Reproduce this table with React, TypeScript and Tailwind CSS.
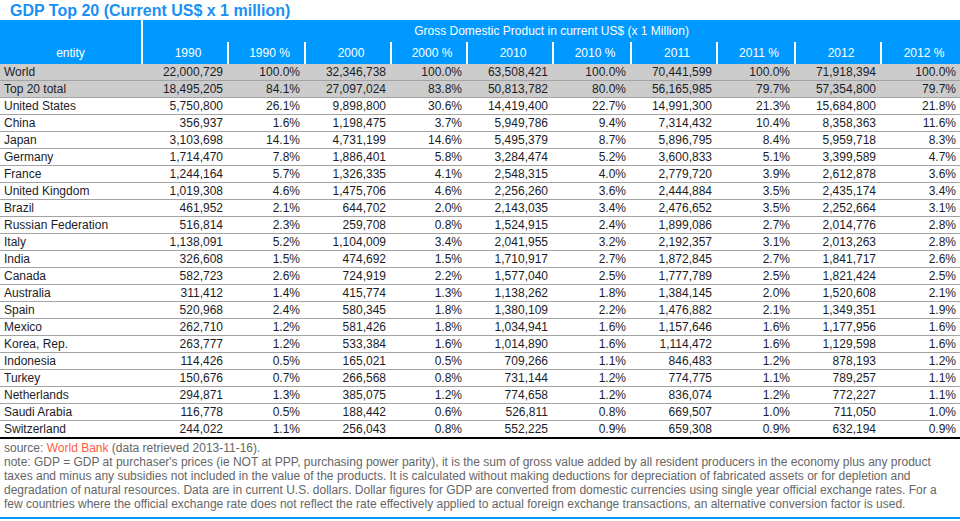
const cols =
  'grid grid-cols-[141px_86px_77px_86px_76px_86px_78px_86px_78px_86px_80px]';

const headers = ['1990', '1990 %', '2000', '2000 %', '2010', '2010 %', '2011', '2011 %', '2012', '2012 %'];

type Row = { name: string; values: string[]; total?: boolean };

const rows: Row[] = [
  { name: 'World', total: true, values: ['22,000,729', '100.0%', '32,346,738', '100.0%', '63,508,421', '100.0%', '70,441,599', '100.0%', '71,918,394', '100.0%'] },
  { name: 'Top 20 total', total: true, values: ['18,495,205', '84.1%', '27,097,024', '83.8%', '50,813,782', '80.0%', '56,165,985', '79.7%', '57,354,800', '79.7%'] },
  { name: 'United States', values: ['5,750,800', '26.1%', '9,898,800', '30.6%', '14,419,400', '22.7%', '14,991,300', '21.3%', '15,684,800', '21.8%'] },
  { name: 'China', values: ['356,937', '1.6%', '1,198,475', '3.7%', '5,949,786', '9.4%', '7,314,432', '10.4%', '8,358,363', '11.6%'] },
  { name: 'Japan', values: ['3,103,698', '14.1%', '4,731,199', '14.6%', '5,495,379', '8.7%', '5,896,795', '8.4%', '5,959,718', '8.3%'] },
  { name: 'Germany', values: ['1,714,470', '7.8%', '1,886,401', '5.8%', '3,284,474', '5.2%', '3,600,833', '5.1%', '3,399,589', '4.7%'] },
  { name: 'France', values: ['1,244,164', '5.7%', '1,326,335', '4.1%', '2,548,315', '4.0%', '2,779,720', '3.9%', '2,612,878', '3.6%'] },
  { name: 'United Kingdom', values: ['1,019,308', '4.6%', '1,475,706', '4.6%', '2,256,260', '3.6%', '2,444,884', '3.5%', '2,435,174', '3.4%'] },
  { name: 'Brazil', values: ['461,952', '2.1%', '644,702', '2.0%', '2,143,035', '3.4%', '2,476,652', '3.5%', '2,252,664', '3.1%'] },
  { name: 'Russian Federation', values: ['516,814', '2.3%', '259,708', '0.8%', '1,524,915', '2.4%', '1,899,086', '2.7%', '2,014,776', '2.8%'] },
  { name: 'Italy', values: ['1,138,091', '5.2%', '1,104,009', '3.4%', '2,041,955', '3.2%', '2,192,357', '3.1%', '2,013,263', '2.8%'] },
  { name: 'India', values: ['326,608', '1.5%', '474,692', '1.5%', '1,710,917', '2.7%', '1,872,845', '2.7%', '1,841,717', '2.6%'] },
  { name: 'Canada', values: ['582,723', '2.6%', '724,919', '2.2%', '1,577,040', '2.5%', '1,777,789', '2.5%', '1,821,424', '2.5%'] },
  { name: 'Australia', values: ['311,412', '1.4%', '415,774', '1.3%', '1,138,262', '1.8%', '1,384,145', '2.0%', '1,520,608', '2.1%'] },
  { name: 'Spain', values: ['520,968', '2.4%', '580,345', '1.8%', '1,380,109', '2.2%', '1,476,882', '2.1%', '1,349,351', '1.9%'] },
  { name: 'Mexico', values: ['262,710', '1.2%', '581,426', '1.8%', '1,034,941', '1.6%', '1,157,646', '1.6%', '1,177,956', '1.6%'] },
  { name: 'Korea, Rep.', values: ['263,777', '1.2%', '533,384', '1.6%', '1,014,890', '1.6%', '1,114,472', '1.6%', '1,129,598', '1.6%'] },
  { name: 'Indonesia', values: ['114,426', '0.5%', '165,021', '0.5%', '709,266', '1.1%', '846,483', '1.2%', '878,193', '1.2%'] },
  { name: 'Turkey', values: ['150,676', '0.7%', '266,568', '0.8%', '731,144', '1.2%', '774,775', '1.1%', '789,257', '1.1%'] },
  { name: 'Netherlands', values: ['294,871', '1.3%', '385,075', '1.2%', '774,658', '1.2%', '836,074', '1.2%', '772,227', '1.1%'] },
  { name: 'Saudi Arabia', values: ['116,778', '0.5%', '188,442', '0.6%', '526,811', '0.8%', '669,507', '1.0%', '711,050', '1.0%'] },
  { name: 'Switzerland', values: ['244,022', '1.1%', '256,043', '0.8%', '552,225', '0.9%', '659,308', '0.9%', '632,194', '0.9%'] },
];

export default function App() {
  return (
    <div className="w-[960px] h-[521px] bg-white font-['Liberation_Sans',Arial,sans-serif] text-[12px]">
      <h1 className="h-5 pl-[10px] pt-px text-[16px] leading-[19px] font-bold text-[#1a90f2]">
        GDP Top 20 (Current US$ x 1 million)
      </h1>

      {/* header */}
      <div className={`${cols} bg-[#0099ff] text-white`}>
        <div className="row-span-2 flex items-end justify-center pb-[3px] leading-[16px]">entity</div>
        <div className="col-span-10 h-[22px] border-l-2 border-white text-center leading-[22px]">
          Gross Domestic Product in current US$ (x 1 Million)
        </div>
        {headers.map((h) => (
          <div key={h} className="h-[22px] border-l-2 border-white pl-[6px] text-center leading-[22px]">
            {h}
          </div>
        ))}
      </div>

      {/* body */}
      {rows.map((r, i) => (
        <div
          key={r.name}
          className={`${cols} h-[17px] leading-[16px] text-[#1c1c28] ${r.total ? 'bg-[#cccccc]' : 'bg-white'} ${
            i === rows.length - 1 ? 'h-[18px] border-b-2 border-black' : 'border-b border-[#a3a3a3]'
          }`}
        >
          <div className="pl-1 whitespace-nowrap">{r.name}</div>
          {r.values.map((v, j) => (
            <div key={j} className="pr-[4px] text-right">
              {v}
            </div>
          ))}
        </div>
      ))}

      {/* notes */}
      <div className="px-1 pt-[2px] pb-[6px] leading-[14px] text-[#666666] border-b-2 border-[#0099ff]">
        <p>
          source: <span className="text-[#ff5a45]">World Bank</span> (data retrieved 2013-11-16).
        </p>
        <p>
          note: GDP = GDP at purchaser's prices (ie NOT at PPP, purchasing power parity), it is the sum of gross value
          added by all resident producers in the economy plus any product taxes and minus any subsidies not included in
          the value of the products. It is calculated without making deductions for depreciation of fabricated assets
          or for depletion and degradation of natural resources. Data are in current U.S. dollars. Dollar figures for
          GDP are converted from domestic currencies using single year official exchange rates. For a few countries
          where the official exchange rate does not reflect the rate effectively applied to actual foreign exchange
          transactions, an alternative conversion factor is used.
        </p>
      </div>
    </div>
  );
}
